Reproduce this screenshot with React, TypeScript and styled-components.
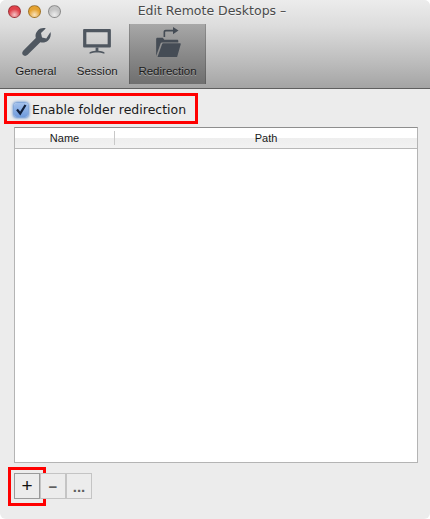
import React from "react";
import styled, {createGlobalStyle} from "styled-components";

const GlobalStyle = createGlobalStyle`
  html, body {
    margin: 0;
    padding: 0;
    background: #ffffff;
  }
  * {
    box-sizing: border-box;
  }
`

const WrenchIcon = () => (
    <svg width="32" height="30" viewBox="0 0 32 30">
        <path fill="#4f5760"
              d="M30.500 5c.8 3.200-.1 6.300-2.400 8.400-2.200 2-5 2.600-7.800 1.800L7.600 27.800c-1.400 1.400-3.400 1.500-4.600.3-1.200-1.300-1-3.200.4-4.600L15.800 11c-.8-2.800-.1-5.600 2-7.600C19.900 1.400 22.800.6 25.800 1.400L21 6.100l1 4.300 4.300 1z"/>
    </svg>
)

const MonitorIcon = () => (
    <svg width="28" height="25" viewBox="0 0 30 27">
        <path fill="#4f5760" fillRule="evenodd" d="M1 0h28a1 1 0 0 1 1 1v18a1 1 0 0 1-1 1H1a1 1 0 0 1-1-1V1a1 1 0 0 1 1-1zm2.500 3.500v13h23v-13z"/>
        <path fill="#4f5760" d="M13.500 20h3v3.500c2.500.2 5 .7 6.500 1.500v1.800c-2.500-.9-5.500-1.300-8-1.300s-5.500.4-8 1.300V25c1.500-.8 4-1.300 6.500-1.500z"/>
    </svg>
)

const FolderIcon = () => (
    <svg width="26" height="31" viewBox="0 0 28 34">
        <path fill="#454c55" d="M1 33V14.500c0-.8.500-1.500 1.300-1.500h6l1.700 2h14c.8 0 1.300.6 1.300 1.300V18H7.500c-.8 0-1.300.4-1.600 1.100z"/>
        <path fill="#454c55" d="M2.500 34l5-14.300c.2-.5.600-.7 1.100-.7H27c.7 0 1.100.6.900 1.200L24 34z"/>
        <path fill="none" stroke="#454c55" strokeWidth="1.800" d="M10 12V6.500c0-1 .6-1.500 1.500-1.500H21"/>
        <path fill="#454c55" d="M19.500 1l6 4-6 4z"/>
    </svg>
)

export default function App() {
    return (
        <Window>
            <GlobalStyle/>
            <TitleBar>
                <Lights>
                    <Light color="#e0414a"/>
                    <Light color="#e5a22f"/>
                    <Light color="#c3c3c3"/>
                </Lights>
                <Title>Edit Remote Desktops –</Title>
                <Toolbar>
                    <ToolItem>
                        <ToolIcon><WrenchIcon/></ToolIcon>
                        <ToolLabel>General</ToolLabel>
                    </ToolItem>
                    <ToolItem>
                        <ToolIcon><MonitorIcon/></ToolIcon>
                        <ToolLabel>Session</ToolLabel>
                    </ToolItem>
                    <ToolItem selected>
                        <ToolIcon><FolderIcon/></ToolIcon>
                        <ToolLabel>Redirection</ToolLabel>
                    </ToolItem>
                </Toolbar>
            </TitleBar>
            <Content>
                <Highlight>
                    <CheckBox>
                        <svg width="12" height="12" viewBox="0 0 12 12">
                            <path fill="none" stroke="#10203c" strokeWidth="2.200" d="M2 5.500l3.200 4L10.500 1"/>
                        </svg>
                    </CheckBox>
                    <CheckLabel>Enable folder redirection</CheckLabel>
                </Highlight>
                <Table>
                    <TableHead>
                        <NameColumn>Name</NameColumn>
                        <PathColumn>Path</PathColumn>
                    </TableHead>
                    <TableBody/>
                </Table>
                <Buttons>
                    <SquareButton active>
                        +
                        <ButtonHighlight/>
                    </SquareButton>
                    <SquareButton>−</SquareButton>
                    <SquareButton>...</SquareButton>
                </Buttons>
            </Content>
        </Window>
    )
}

//styled-components
const Window = styled.div`
  width: 430px;
  height: 519px;
  display: flex;
  flex-direction: column;
  background: #ececec;
  border-radius: 6px;
  overflow: hidden;
  font-family: "DejaVu Sans", sans-serif;
`
const TitleBar = styled.div`
  position: relative;
  height: 89px;
  flex-shrink: 0;
  display: flex;
  flex-direction: column;
  background: linear-gradient(#ececec 0%, #dcdcdc 30%, #bdbdbd 70%, #a4a4a4 100%);
  border-bottom: 1px solid #5f5f5f;
`
const Lights = styled.div`
  position: absolute;
  left: 8px;
  top: 5px;
  display: flex;
  gap: 7px;
`
const Light = styled.div<{color: string}>`
  width: 13px;
  height: 13px;
  border-radius: 50%;
  border: 1px solid rgba(0, 0, 0, 0.3);
  background: radial-gradient(circle at 50% 80%, #ffffff -25%, ${props => props.color} 55%, ${props => props.color} 100%);
`
const Title = styled.div`
  height: 24px;
  padding: 3px 6px 0 0;
  text-align: center;
  font-size: 12.5px;
  line-height: 16px;
  color: #4a4a4a;
  text-shadow: 0 1px 0 rgba(255, 255, 255, 0.6);
`
const Toolbar = styled.div`
  display: flex;
  padding-left: 5px;
  height: 60px;
`
const ToolItem = styled.div<{selected?: boolean}>`
  width: ${props => props.selected ? 77 : 61.5}px;
  margin-left: ${props => props.selected ? 1 : 0}px;
  display: flex;
  flex-direction: column;
  align-items: center;
  background: ${props => props.selected
          ? "linear-gradient(#a8a8a8, #8a8a8a 50%, #6f6f6f)"
          : "transparent"};
  box-shadow: ${props => props.selected
          ? "inset 1px 0 0 rgba(0,0,0,0.15), inset -1px 0 0 rgba(0,0,0,0.15)"
          : "none"};
`
const ToolIcon = styled.div`
  height: 35px;
  display: flex;
  align-items: center;
  justify-content: center;
`
const ToolLabel = styled.div`
  font-family: "Liberation Sans", sans-serif;
  font-size: 11.5px;
  line-height: 16px;
  margin-top: 4px;
  color: #1c1c1c;
  white-space: nowrap;
  text-shadow: 0 1px 0 rgba(255, 255, 255, 0.35);
`
const Content = styled.div`
  flex: 1;
  display: flex;
  flex-direction: column;
  padding: 4px 12px 0 14px;
`
const Highlight = styled.div`
  width: 194px;
  height: 31px;
  margin-left: -10px;
  display: flex;
  align-items: center;
  gap: 4px;
  padding: 3px 0 0 7px;
  border: 3px solid #ff0000;
`
const CheckBox = styled.div`
  width: 14px;
  height: 14px;
  display: flex;
  align-items: center;
  justify-content: center;
  border-radius: 3px;
  background: linear-gradient(#a3c1ec, #6f9bdc);
  box-shadow: 0 0 3px 1px #4a82d0;
`
const CheckLabel = styled.div`
  font-size: 12.5px;
  line-height: 18px;
  color: #1a1a1a;
  white-space: nowrap;
`
const Table = styled.div`
  width: 404px;
  height: 336px;
  margin-top: 3px;
  display: flex;
  flex-direction: column;
  background: #ffffff;
  border: 1px solid #b4b4b4;
  border-top-color: #8e8e8e;
`
const TableHead = styled.div`
  height: 21px;
  display: flex;
  align-items: center;
  border-bottom: 1px solid #b8b8b8;
  background: linear-gradient(#ffffff 50%, #eeeeee 50%, #f2f2f2);
  font-family: "Liberation Sans", sans-serif;
  font-size: 11px;
  color: #1a1a1a;
`
const NameColumn = styled.div`
  width: 100px;
  text-align: center;
  border-right: 1px solid #c8c8c8;
  line-height: 14px;
`
const PathColumn = styled.div`
  flex: 1;
  text-align: center;
  line-height: 14px;
`
const TableBody = styled.div`
  flex: 1;
`
const Buttons = styled.div`
  margin-top: 10px;
  display: flex;
`
const SquareButton = styled.div<{active?: boolean}>`
  position: relative;
  width: 26px;
  height: 26px;
  display: flex;
  align-items: center;
  justify-content: center;
  font-family: "Liberation Sans", sans-serif;
  font-size: ${props => props.active ? 19 : 15}px;
  font-weight: ${props => props.active ? "normal" : "bold"};
  color: ${props => props.active ? "#111111" : "#5f5f5f"};
  background: #ececec;
  border: 1px solid ${props => props.active ? "#9a9a9a" : "#c4c4c4"};
`
const ButtonHighlight = styled.div`
  position: absolute;
  left: -7px;
  top: -7px;
  width: 38px;
  height: 39px;
  border: 3px solid #ff0000;
`
